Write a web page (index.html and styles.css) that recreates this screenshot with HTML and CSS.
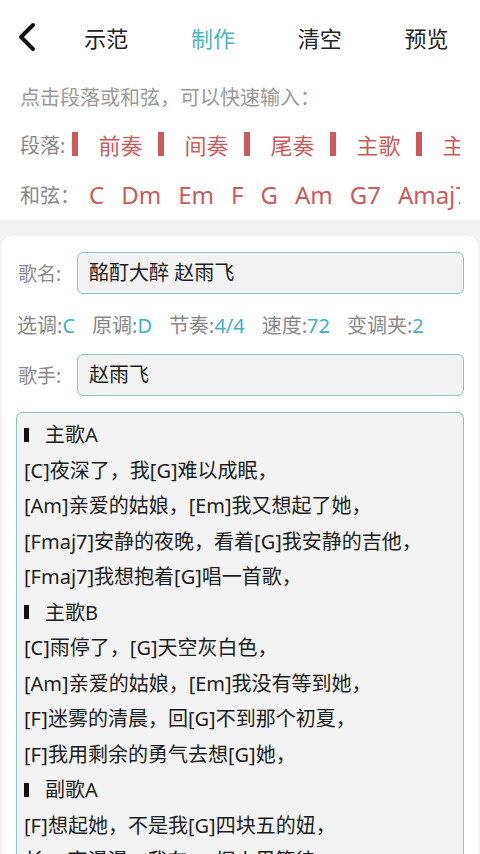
FILE: index.html
```html
<!DOCTYPE html>
<html lang="zh-CN">
<head>
  <meta charset="UTF-8">
  <meta name="viewport" content="width=device-width, initial-scale=1">
  <title>制作</title>
  <link rel="stylesheet" href="styles.css">
</head>
<body>
  <div class="topbar">
    <div class="back">
      <svg width="22" height="32" viewBox="0 0 22 32">
        <path d="M16 4 L4 16 L16 28" fill="none" stroke="#111" stroke-width="4" stroke-linecap="round" stroke-linejoin="round"/>
      </svg>
    </div>
    <div class="tab">示范</div>
    <div class="tab active">制作</div>
    <div class="tab">清空</div>
    <div class="tab">预览</div>
  </div>

  <div class="quick">
    <div class="hint">点击段落或和弦，可以快速输入：</div>
    <div class="quick-row para-row">
      <span class="quick-label">段落:</span>
      <span class="para"><i class="bar"></i>前奏</span>
      <span class="para"><i class="bar"></i>间奏</span>
      <span class="para"><i class="bar"></i>尾奏</span>
      <span class="para"><i class="bar"></i>主歌</span>
      <span class="para"><i class="bar"></i>主歌</span>
    </div>
    <div class="quick-row chord-row">
      <span class="quick-label">和弦：</span>
      <span class="chord">C</span>
      <span class="chord">Dm</span>
      <span class="chord">Em</span>
      <span class="chord">F</span>
      <span class="chord">G</span>
      <span class="chord">Am</span>
      <span class="chord">G7</span>
      <span class="chord">Amaj7</span>
    </div>
  </div>

  <div class="sheet">
    <div class="card">
      <div class="field">
        <label class="field-label">歌名:</label>
        <div class="field-input">酩酊大醉 赵雨飞</div>
      </div>
      <div class="meta">
        <span>选调:<b>C</b></span>
        <span>原调:<b>D</b></span>
        <span>节奏:<b>4/4</b></span>
        <span>速度:<b>72</b></span>
        <span>变调夹:<b>2</b></span>
      </div>
      <div class="field">
        <label class="field-label">歌手:</label>
        <div class="field-input">赵雨飞</div>
      </div>

      <div class="lyrics">
        <div class="section"><i class="mark"></i>主歌A</div>
        <div>[C]夜深了，我[G]难以成眠，</div>
        <div>[Am]亲爱的姑娘，[Em]我又想起了她，</div>
        <div>[Fmaj7]安静的夜晚，看着[G]我安静的吉他，</div>
        <div>[Fmaj7]我想抱着[G]唱一首歌，</div>
        <div class="section"><i class="mark"></i>主歌B</div>
        <div>[C]雨停了，[G]天空灰白色，</div>
        <div>[Am]亲爱的姑娘，[Em]我没有等到她，</div>
        <div>[F]迷雾的清晨，回[G]不到那个初夏，</div>
        <div>[F]我用剩余的勇气去想[G]她，</div>
        <div class="section"><i class="mark"></i>副歌A</div>
        <div>[F]想起她，不是我[G]四块五的妞，</div>
        <div>长[F]夜漫漫，我在[G]烟火里等待，</div>
        <div>[Am]亲爱的姑娘，[Em]你在哪里，</div>
      </div>
    </div>
  </div>
</body>
</html>
```

FILE: styles.css
```css
* {
  box-sizing: border-box;
}
body {
  margin: 0;
  font-family: "Noto Sans", "Noto Sans CJK SC", sans-serif;
  background: #fff;
  color: #222;
  height: 854px;
  overflow: hidden;
}

/* header */
.topbar {
  display: flex;
  align-items: center;
  height: 74px;
}
.back {
  width: 53px;
  display: flex;
  justify-content: center;
  padding-left: 2px;
}
.back svg {
  display: block;
}
.tab {
  flex: 1;
  text-align: center;
  font-size: 22px;
  color: #222;
}
.tab.active {
  color: #4ab6c1;
}

/* quick insert */
.quick {
  padding: 0 20px;
}
.hint {
  height: 48px;
  line-height: 48px;
  font-size: 20px;
  color: #999;
}
.quick-row {
  display: flex;
  align-items: center;
  white-space: nowrap;
  overflow: hidden;
  width: 440px;
}
.para-row {
  height: 44px;
}
.chord-row {
  height: 54px;
  padding-top: 3px;
}
.quick-label {
  font-size: 20px;
  color: #888;
  flex: none;
}
.para-row .quick-label {
  margin-right: 7px;
}
.para {
  display: flex;
  align-items: center;
  flex: none;
  font-size: 22px;
  color: #cc5a5c;
  margin-right: 16px;
}
.bar {
  display: inline-block;
  width: 6px;
  height: 24px;
  background: #cc5a5c;
  margin-right: 20px;
}
.chord-row .quick-label {
  margin-right: 9px;
}
.chord {
  flex: none;
  font-size: 24px;
  color: #cc5a5c;
  margin-right: 17px;
}

/* song sheet */
.sheet {
  background: #f3f3f3;
  padding-top: 16px;
  min-height: 634px;
}
.card {
  background: #fff;
  margin: 0 2px;
  border-radius: 10px 10px 0 0;
  padding: 16px 14px 0;
  min-height: 618px;
}
.field {
  display: flex;
  align-items: center;
}
.field-label {
  width: 61px;
  padding-left: 2px;
  font-size: 19px;
  color: #888;
}
.field-input {
  flex: 1;
  height: 42px;
  line-height: 39px;
  padding: 0 11px;
  border: 1.5px solid #8ac4c5;
  border-radius: 6px;
  background: #f2f2f2;
  font-size: 20px;
  color: #1c1c1c;
}
.meta {
  height: 60px;
  display: flex;
  align-items: center;
  padding-left: 1px;
  font-size: 20px;
  color: #888;
}
.meta span {
  margin-right: 17px;
}
.meta b {
  font-weight: normal;
  color: #3db4bf;
}
.lyrics {
  margin-top: 16px;
  border: 1.5px solid #8ac4c5;
  border-radius: 6px;
  background: #f3f3f3;
  padding: 4px 7px 0;
  font-size: 20px;
  line-height: 35.5px;
  color: #1c1c1c;
  height: 460px;
  overflow: hidden;
}
.section {
  display: flex;
  align-items: center;
}
.mark {
  display: inline-block;
  width: 5px;
  height: 14px;
  background: #111;
  margin-right: 16px;
}
```
